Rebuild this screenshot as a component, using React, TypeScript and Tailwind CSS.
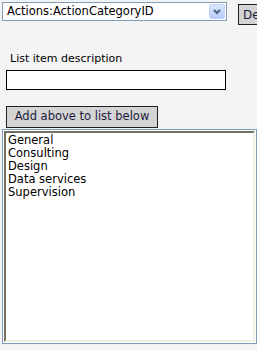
import React from "react";

const items = ["General", "Consulting", "Design", "Data services", "Supervision"];

export default function App() {
  return (
    <div className="w-[257px] h-[350px] overflow-hidden bg-[#f4f4f4] text-black font-['DejaVu_Sans','Liberation_Sans',sans-serif] text-[11px]">
      {/* top row: select + cut-off button */}
      <div className="flex items-start pt-[2px] pl-[2px] whitespace-nowrap">
        <div className="shrink-0 flex items-center justify-between w-[225px] h-[19px] bg-white border border-[#7f9db9] pl-[4px] pr-[1px]">
          <span className="leading-none text-[11.5px]">Actions:ActionCategoryID</span>
          <span className="flex items-center justify-center w-[16px] h-[15px] rounded-[2px] bg-[linear-gradient(#dbe6fd,#b7cdf9)] border border-[#c3d3fd]">
            <svg width="8" height="6" viewBox="0 0 8 6">
              <path d="M1 1 L4 4 L7 1" fill="none" stroke="#4d6185" strokeWidth="2" />
            </svg>
          </span>
        </div>
        <button className="shrink-0 ml-[11px] mt-[2px] h-[21px] px-[4px] bg-[#d4d4d4] border border-[#202020] text-[12px] text-[#1c1c3a] leading-none">
          Delete
        </button>
      </div>

      <p className="pl-[10px] mt-[26px] leading-[15px]">List item description</p>

      <div className="pl-[6px] mt-[4px]">
        <div className="w-[220px] h-[20px] bg-white border border-black" />
      </div>

      <div className="pl-[6px] mt-[16px]">
        <button className="w-[152px] h-[22px] bg-[#d4d4d4] border border-[#202020] text-[11.5px] text-[#1c1c3a] leading-none">
          Add above to list below
        </button>
      </div>

      <div className="ml-[2px] mt-px w-[255px] h-[215px] border border-[#7f9db9] bg-white p-px">
        <div className="h-full border-2 border-t-[#716f64] border-l-[#716f64] border-r-[#f1efe2] border-b-[#f1efe2] pl-[2px] pt-[1px] text-[11.5px]">
          {items.map((item) => (
            <div key={item} className="leading-[13px]">
              {item}
            </div>
          ))}
        </div>
      </div>
    </div>
  );
}
